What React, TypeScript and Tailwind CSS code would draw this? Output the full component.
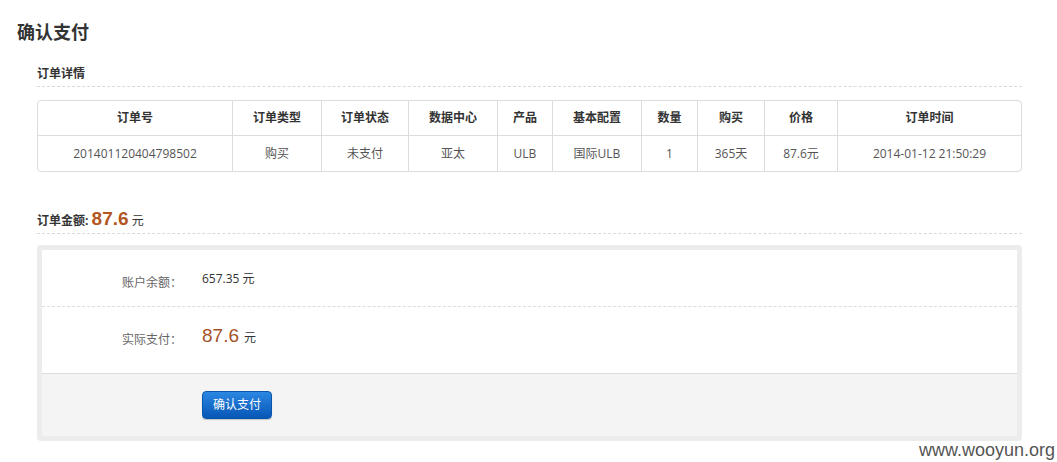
import React from "react";

const cols = ["订单号", "订单类型", "订单状态", "数据中心", "产品", "基本配置", "数量", "购买", "价格", "订单时间"];
const vals = ["201401120404798502", "购买", "未支付", "亚太", "ULB", "国际ULB", "1", "365天", "87.6元", "2014-01-12 21:50:29"];

export default function App() {
  const font = { fontFamily: '"Open Sans", "Noto Sans CJK SC", sans-serif' };
  return (
    <div className="relative w-[1057px] h-[462px] bg-white overflow-hidden text-[12px] text-[#333]" style={font}>
      <div className="pl-[17px] pt-[20px] text-[18px] leading-[24px] font-bold text-[#333]">确认支付</div>

      <div className="ml-[37px] w-[985px]">
        <div className="mt-[18px] h-[25px] leading-[24px] font-bold text-[12px] text-[#333] border-b border-dashed border-[#d9d9d9]">
          订单详情
        </div>

        <div className="mt-[13px] border border-[#dcdcdc] rounded-[4px] overflow-hidden">
          <div className="grid grid-cols-[194px_89px_87px_89px_55px_89px_56px_67px_73px_184px] h-[35px] border-b border-[#dcdcdc]">
            {cols.map((c, i) => (
              <div
                key={c}
                className={`flex items-center justify-center font-bold text-[#333] ${i > 0 ? "border-l border-[#dcdcdc]" : ""}`}
              >
                {c}
              </div>
            ))}
          </div>
          <div className="grid grid-cols-[194px_89px_87px_89px_55px_89px_56px_67px_73px_184px] h-[35px]">
            {vals.map((v, i) => (
              <div
                key={i}
                className={`flex items-center justify-center text-[#555] ${i > 0 ? "border-l border-[#dcdcdc]" : ""}`}
              >
                {v}
              </div>
            ))}
          </div>
        </div>

        <div className="mt-[36px] h-[26px] leading-[25px] border-b border-dashed border-[#d9d9d9] font-bold text-[#333]">
          <span>订单金额:</span>{" "}
          <span className="text-[19px] leading-none font-bold text-[#b4561f]" style={{ fontFamily: '"Liberation Sans", sans-serif' }}>87.6</span>{" "}
          <span className="font-normal">元</span>
        </div>

        <div className="mt-[11px] border-[5px] border-[#ececec] rounded-[4px] bg-white">
          <div className="flex h-[57px] border-b border-dashed border-[#dcdcdc]">
            <div className="w-[140px] text-right pt-[25px] leading-[16px] text-[#666]">账户余额：</div>
            <div className="pl-[20px] pt-[21px] leading-[16px] text-[#333]">657.35 元</div>
          </div>
          <div className="flex h-[67px] border-b border-[#dcdcdc]">
            <div className="w-[140px] text-right pt-[25px] leading-[16px] text-[#666]">实际支付：</div>
            <div className="pl-[20px] pt-[17px] flex items-baseline gap-[5px]">
              <span className="text-[19px] leading-[24px] text-[#a5532a]" style={{ fontFamily: '"Liberation Sans", sans-serif' }}>87.6</span>
              <span className="text-[#333]">元</span>
            </div>
          </div>
          <div className="h-[62px] bg-[#f4f4f4] pl-[160px] pt-[17px]">
            <button className="w-[70px] h-[28px] rounded-[4px] border border-[#0b56ad] bg-gradient-to-b from-[#2b88e2] to-[#0656b6] text-white text-[12px] leading-[26px] shadow-[0_1px_1px_rgba(0,0,0,0.2)]">
              确认支付
            </button>
          </div>
        </div>
      </div>

      <div
        className="absolute right-[2px] top-[441px] text-[18px] leading-[18px] text-[#555]"
        style={{ fontFamily: '"Liberation Sans", sans-serif' }}
      >
        www.wooyun.org
      </div>
    </div>
  );
}
